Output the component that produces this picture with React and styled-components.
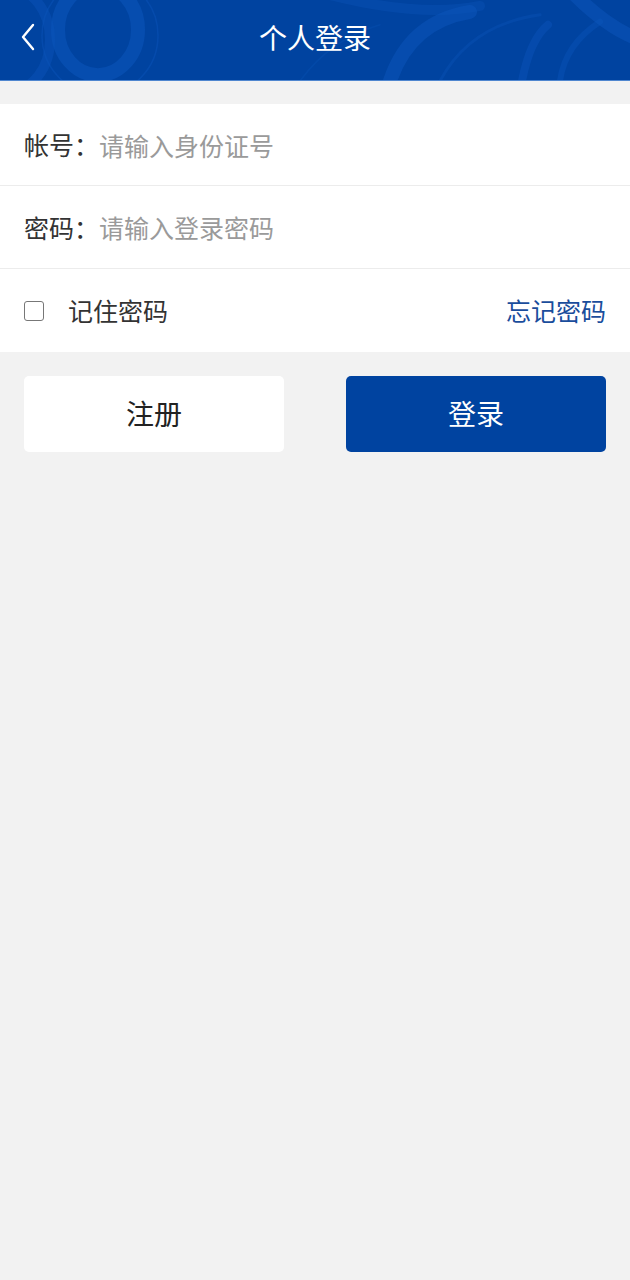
import React from "react";
import styled, { createGlobalStyle } from "styled-components";

const Global = createGlobalStyle`
  html, body { margin: 0; padding: 0; background: #f2f2f2; }
  body { font-family: "Noto Sans CJK SC", "Noto Sans", sans-serif; }
  * { box-sizing: border-box; }
`;

const Page = styled.div`
  width: 630px;
  min-height: 1280px;
  background: #f2f2f2;
`;

const Header = styled.header`
  position: relative;
  height: 81px;
  background: #0043a0;
  border-bottom: 1px solid #4f86cf;
  display: flex;
  align-items: center;
  justify-content: center;
  overflow: hidden;
`;

const Decor = styled.svg`
  position: absolute;
  inset: 0;
  width: 100%;
  height: 100%;
`;

const BackBtn = styled.button`
  position: absolute;
  left: 14px;
  top: 20px;
  width: 28px;
  height: 34px;
  padding: 0;
  border: none;
  background: transparent;
  display: flex;
  align-items: center;
  justify-content: center;
`;

const Title = styled.h1`
  position: relative;
  margin: 0;
  color: #fff;
  font-size: 28px;
  font-weight: 400;
  line-height: 1;
  margin-top: -6px;
`;

const Form = styled.section`
  margin-top: 23px;
  background: #fff;
`;

const Row = styled.div`
  height: ${(p) => p.$h || 82}px;
  display: flex;
  align-items: center;
  padding: 0 24px;
  border-bottom: ${(p) => (p.$last ? "none" : "1px solid #ececec")};
`;

const Label = styled.label`
  font-size: 25px;
  color: #333;
  white-space: nowrap;
  line-height: 1;
`;

const Input = styled.input`
  flex: 1;
  border: none;
  outline: none;
  background: transparent;
  font-family: inherit;
  font-size: 25px;
  color: #333;
  padding: 0;
  &::placeholder { color: #9a9a9a; }
`;

const Check = styled.span`
  width: 20px;
  height: 20px;
  border: 1.5px solid #777;
  border-radius: 3px;
  background: #fff;
  display: inline-block;
`;

const Remember = styled.span`
  font-size: 25px;
  color: #333;
  margin-left: 24px;
  line-height: 1;
`;

const Forgot = styled.a`
  margin-left: auto;
  font-size: 25px;
  color: #1a4d9c;
  text-decoration: none;
  line-height: 1;
`;

const Buttons = styled.div`
  display: flex;
  justify-content: space-between;
  padding: 24px 24px 0;
`;

const Btn = styled.button`
  width: 260px;
  height: 76px;
  border: none;
  border-radius: 5px;
  font-family: inherit;
  font-size: 28px;
  background: ${(p) => (p.$primary ? "#0043a0" : "#fff")};
  color: ${(p) => (p.$primary ? "#fff" : "#222")};
  padding: 0 0 2px;
`;

export default function App() {
  return (
    <Page>
      <Global />
      <Header>
        <Decor viewBox="0 0 630 81" preserveAspectRatio="none">
          <g fill="none" stroke="#0b55bb" strokeLinecap="round">
            <ellipse cx="98" cy="30" rx="40" ry="46" strokeWidth="14" opacity="0.55" />
            <ellipse cx="100" cy="36" rx="58" ry="60" strokeWidth="1.5" opacity="0.45" />
            <ellipse cx="10" cy="40" rx="40" ry="52" strokeWidth="10" opacity="0.45" />
            <path d="M330 -5 Q420 18 480 6" strokeWidth="10" opacity="0.35" />
            <path d="M390 82 Q410 22 470 12" strokeWidth="14" opacity="0.5" />
            <path d="M440 82 Q470 25 540 15" strokeWidth="3" opacity="0.35" />
            <path d="M522 82 Q530 40 548 25" strokeWidth="8" opacity="0.45" />
            <path d="M560 82 Q565 45 600 22" strokeWidth="6" opacity="0.4" />
            <path d="M575 -5 Q610 30 640 40" strokeWidth="14" opacity="0.5" />
            <path d="M300 82 Q330 40 380 25" strokeWidth="1.5" opacity="0.3" />
          </g>
        </Decor>
        <BackBtn aria-label="back">
          <svg width="16" height="28" viewBox="0 0 16 28">
            <path d="M13 2 L3 14 L13 26" fill="none" stroke="#fff" strokeWidth="2.4" strokeLinecap="round" strokeLinejoin="round" />
          </svg>
        </BackBtn>
        <Title>个人登录</Title>
      </Header>
      <Form>
        <Row>
          <Label>帐号：</Label>
          <Input placeholder="请输入身份证号" />
        </Row>
        <Row $h={83}>
          <Label>密码：</Label>
          <Input type="password" placeholder="请输入登录密码" />
        </Row>
        <Row $h={83} $last>
          <Check />
          <Remember>记住密码</Remember>
          <Forgot href="#">忘记密码</Forgot>
        </Row>
      </Form>
      <Buttons>
        <Btn>注册</Btn>
        <Btn $primary>登录</Btn>
      </Buttons>
    </Page>
  );
}
